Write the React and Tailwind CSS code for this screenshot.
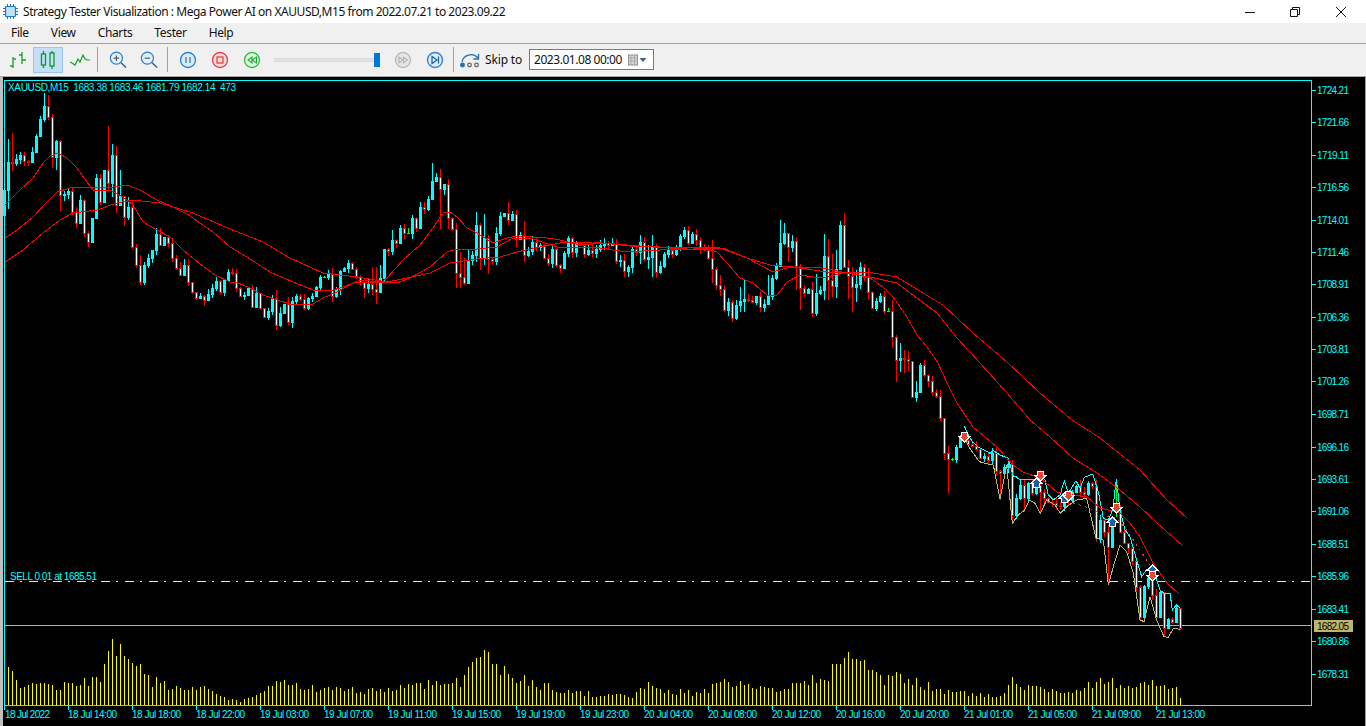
import React from "react";

const UI = { fontFamily: '"Noto Sans", "Liberation Sans", sans-serif' };
const CH = '"Liberation Sans", Arial, sans-serif';

const closes = [190,162,163,159,155,161,162,152,136,119,106,117,157,141,195,194,191,212,223,200,233,242,218,178,202,170,183,155,205,196,217,207,247,265,282,265,258,250,234,245,237,243,258,268,275,265,282,292,298,296,300,294,288,281,292,280,272,273,288,296,295,288,307,293,308,317,311,298,325,313,304,322,301,296,299,308,298,296,287,277,277,274,296,289,271,268,263,269,277,282,288,284,289,292,278,249,251,240,243,228,233,233,218,228,207,209,199,181,177,189,184,218,229,273,277,283,260,255,225,258,238,259,261,233,216,213,220,214,239,235,255,251,242,247,245,258,263,249,265,268,253,238,252,243,245,254,250,253,249,245,243,245,244,261,260,271,267,249,252,242,259,257,246,272,266,254,250,254,249,236,230,243,234,240,249,250,258,269,285,289,310,302,318,305,301,299,300,302,296,307,304,296,278,266,243,233,247,241,266,288,293,289,313,293,290,256,280,286,269,225,267,276,287,284,267,277,292,308,301,296,311,311,337,360,358,359,361,397,392,365,375,381,392,396,418,453,459,459,447,437,440,444,446,449,458,456,460,453,471,473,467,464,515,498,485,498,483,493,485,492,498,502,503,505,506,497,500,492,486,492,494,483,486,538,520,532,547,523,510,532,543,548,561,587,617,586,578,595,617,592,628,619,622,608,628];

const opens = { 0: 215, 278: 510 };
const wicks = {1:[139,209],2:[133,171],10:[93,122],11:[95,120],12:[114,168],13:[140,170],14:[140,211],26:[126,190],27:[144,197],28:[146,213],29:[170,204],30:[197,226],31:[197,220],34:[255,285],68:[290,330],71:[297,325],79:[275,290],82:[268,302],90:[278,298],92:[267,295],93:[267,304],94:[265,290],97:[230,255],107:[163,183],109:[169,229],111:[179,229],113:[223,288],114:[252,288],115:[258,285],116:[250,284],118:[212,262],119:[223,270],120:[214,265],121:[235,274],126:[202,225],128:[210,247],130:[221,262],162:[235,277],161:[245,269],159:[235,264],177:[240,283],179:[275,296],180:[285,312],183:[300,320],184:[287,312],185:[280,312],191:[275,305],192:[275,300],194:[220,266],195:[223,245],196:[233,262],198:[237,290],199:[264,310],202:[282,317],203:[274,316],205:[234,300],206:[239,300],207:[254,297],208:[250,298],209:[221,270],210:[213,268],211:[260,299],212:[267,312],213:[270,302],216:[268,300],222:[300,348],223:[335,382],224:[343,372],225:[350,373],226:[351,371],228:[381,402],236:[446,493],235:[420,460],249:[470,500],252:[460,523],255:[480,512],259:[470,513],273:[480,542],276:[525,585],278:[480,517],290:[600,637],294:[608,630]};

let seed = 17;
const rnd = () => { seed = (seed * 16807) % 2147483647; return seed / 2147483647; };

const candles = closes.map((c, k) => {
  const o = opens[k] ?? closes[k - 1];
  const top = Math.min(o, c), bot = Math.max(o, c);
  const r1 = Math.round(rnd() * 6), r2 = Math.round(rnd() * 6);
  const w = wicks[k] || [top - r1, bot + r2];
  return { x: 4 + 4 * k, o, c, top, bot, hi: w[0], lo: w[1] };
});

const volPts = [[4,28],[8,32],[16,24],[40,20],[80,20],[92,30],[100,30],[108,58],[120,50],[135,40],[150,25],[180,15],[200,18],[220,8],[240,4],[260,10],[276,24],[300,18],[340,15],[370,15],[400,18],[430,22],[460,25],[476,50],[490,45],[510,30],[540,20],[580,12],[610,10],[632,8],[640,22],[660,15],[700,12],[720,22],[760,18],[780,12],[795,30],[820,25],[846,46],[856,43],[880,25],[900,28],[940,15],[980,10],[1000,8],[1012,30],[1025,20],[1060,14],[1080,14],[1094,24],[1120,22],[1140,20],[1160,22],[1176,18],[1180,8]];
const volAt = (x) => {
  for (let i = 1; i < volPts.length; i++) {
    if (x <= volPts[i][0]) {
      const [a, b] = volPts[i - 1], [c, d] = volPts[i];
      return b + ((d - b) * (x - a)) / (c - a);
    }
  }
  return 8;
};

const fast = "5,205 20,190 33,178 43,163 50,156 58,153 67,158 77,168 87,182 93,190 110,190 123,197 133,205 143,222 157,230 170,237 183,250 200,264 215,275 230,282 238,283 250,288 263,295 277,300 290,304 313,304 323,298 337,292 353,283 360,280 370,281 383,281 387,278 403,260 420,245 433,228 443,213 450,212 457,217 467,228 477,233 493,243 507,238 517,236 547,238 560,240 580,245 603,243 627,245 653,247 687,249 707,249 717,252 727,263 740,278 753,283 767,295 777,295 787,282 800,275 813,277 827,277 847,272 870,278 883,287 893,297 907,317 917,335 927,347 938,363 947,383 957,403 973,427 997,447 1013,465 1023,472 1040,478 1057,492 1073,495 1087,497 1100,508 1120,513 1130,523 1140,537 1153,563 1167,583 1179,594";
const mid = "5,238 17,230 33,217 47,202 57,192 70,188 100,187 113,187 127,185 140,190 157,200 173,207 187,214 213,232 230,247 247,257 270,272 293,282 313,290 330,291 343,287 357,282 380,282 397,283 410,278 430,267 447,252 457,249 477,249 497,247 513,238 530,238 560,248 593,247 627,252 660,250 693,249 723,248 747,258 773,272 790,267 817,267 847,273 870,277 897,283 913,295 937,313 957,338 980,363 1007,393 1030,420 1050,437 1073,458 1097,473 1120,490 1140,507 1157,523 1183,546";
const slow = "5,262 23,250 43,233 60,220 73,213 97,210 117,203 133,200 160,203 193,213 230,229 263,242 290,258 323,273 357,277 387,282 407,278 430,273 450,263 477,259 500,257 517,252 540,247 560,243 593,242 630,246 660,247 693,247 720,248 747,258 770,265 793,267 827,272 873,273 897,277 923,293 943,305 973,333 1007,362 1040,393 1072,420 1100,438 1140,470 1167,500 1187,518";

const z5 = (s) => s.trim().split(/\s+/).map((p) => { const [a, b] = p.split(",").map(Number); return `${940 + a / 3},${420 + b / 3}`; }).join(" ");
const envTop = z5("73,18 85,45 97,65 115,82 133,90 150,100 160,92 180,105 205,115 220,170 228,170 240,180 290,178 300,165 315,180 325,225 340,240 360,225 373,182 385,220 408,182 420,205 433,172 458,162 475,215 490,295 505,300 518,270 529,178 540,270 555,330 570,350 590,420 605,470 620,448 640,448 660,510 672,520 690,520 697,570 709,555 721,565");
const envBot = z5("73,50 85,78 100,100 118,125 135,130 160,135 180,238 200,135 217,310 235,285 252,272 268,240 285,250 301,280 320,240 345,255 361,280 380,260 410,240 440,235 468,355 490,360 505,495 520,440 540,375 560,395 580,460 600,600 612,605 630,530 650,600 672,650 685,652 700,625 720,628");
const envDot = z5("400,250 430,258 460,270 490,285 530,295 560,330 590,375 620,420 640,450");

const prices = [["1724.21",90],["1721.66",122],["1719.11",155],["1716.56",187],["1714.01",220],["1711.46",252],["1708.91",284],["1706.36",317],["1703.81",349],["1701.26",381],["1698.71",414],["1696.16",447],["1693.61",479],["1691.06",511],["1688.51",544],["1685.96",576],["1683.41",609],["1680.86",641],["1678.31",674]];
const times = ["18 Jul 2022","18 Jul 14:00","18 Jul 18:00","18 Jul 22:00","19 Jul 03:00","19 Jul 07:00","19 Jul 11:00","19 Jul 15:00","19 Jul 19:00","19 Jul 23:00","20 Jul 04:00","20 Jul 08:00","20 Jul 12:00","20 Jul 16:00","20 Jul 20:00","21 Jul 01:00","21 Jul 05:00","21 Jul 09:00","21 Jul 13:00"];

function Sell({ x, y }) {
  return (
    <g shapeRendering="crispEdges">
      <polygon points={`${x - 3},${y - 5} ${x + 4},${y - 5} ${x + 4},${y - 1} ${x + 7},${y - 1} ${x + 0.5},${y + 6} ${x - 6},${y - 1} ${x - 3},${y - 1}`} fill="#fff" />
      <polygon points={`${x - 2},${y - 4} ${x + 3},${y - 4} ${x + 3},${y} ${x + 5},${y} ${x + 0.5},${y + 4} ${x - 4},${y} ${x - 2},${y}`} fill="#e8472b" />
    </g>
  );
}
function Buy({ x, y }) {
  return (
    <g shapeRendering="crispEdges">
      <polygon points={`${x + 0.5},${y - 6} ${x + 7},${y + 1} ${x + 4},${y + 1} ${x + 4},${y + 5} ${x - 3},${y + 5} ${x - 3},${y + 1} ${x - 6},${y + 1}`} fill="#fff" />
      <polygon points={`${x + 0.5},${y - 4} ${x + 5},${y} ${x + 3},${y} ${x + 3},${y + 4} ${x - 2},${y + 4} ${x - 2},${y} ${x - 4},${y}`} fill="#1f5fa8" />
    </g>
  );
}

function Chart() {
  const t = { fontFamily: CH, fontSize: 10, fill: "#00ffff", whiteSpace: "pre" };
  return (
    <svg width="1362" height="649" viewBox="3 77 1362 649" className="block bg-black">
      <g shapeRendering="crispEdges">
        <rect x="4" y="80" width="1308" height="1" fill="#00ffff" />
        <rect x="4" y="705" width="1308" height="1" fill="#00ffff" />
        <rect x="4" y="80" width="1" height="626" fill="#00ffff" />
        <rect x="1311" y="80" width="1" height="626" fill="#00ffff" />
        {prices.map(([p, y]) => <rect key={p} x="1312" y={y} width="4" height="1" fill="#00ffff" />)}
        {times.map((l, i) => <rect key={l} x={4 + 64 * i} y="706" width="1" height="4" fill="#00ffff" />)}

        {candles.map((c, k) => {
          const h = Math.max(2, Math.round(volAt(c.x) * (0.72 + rnd() * 0.5)));
          return k === 0 ? null : <rect key={k} x={c.x} y={705 - h} width="1" height={h} fill="#ffff00" />;
        })}

        <line x1="5" x2="1311" y1="625.5" y2="625.5" stroke="#bdb76b" />
        <line x1="5" x2="1311" y1="581.5" y2="581.5" stroke="#ffff00" strokeDasharray="9 6 2 7" />

        {candles.map((c, k) => {
          const doji = c.o === c.c;
          const up = c.c < c.o;
          if (doji && (k === 80 || k === 101 || k === 221 || k === 237 || k === 278)) {
            return (
              <g key={k} fill="#00ff00">
                <rect x={c.x} y={c.hi} width="1" height={c.lo - c.hi} />
                <rect x={c.x - 1} y={c.c} width="3" height="1" />
              </g>
            );
          }
          if (up) {
            return (
              <g key={k} fill="#00ffff">
                <rect x={c.x} y={c.hi} width="1" height={c.lo - c.hi} />
                <rect x={c.x - 1} y={c.top} width="3" height={c.bot - c.top + 1} />
              </g>
            );
          }
          const h = c.bot - c.top + 1;
          return (
            <g key={k}>
              <rect x={c.x} y={c.hi} width="1" height={c.lo - c.hi} fill="#ff0000" />
              <rect x={c.x - 1} y={c.top} width="3" height={Math.max(h, 2)} fill="#ff0000" />
              {h >= 3 && <rect x={c.x} y={c.top + 1} width="1" height={h - 2} fill="#ffffff" />}
            </g>
          );
        })}

        <polyline points={envDot} fill="none" stroke="#d8502c" strokeDasharray="2 4" />
        <polyline points={envBot} fill="none" stroke="#bdb76b" />
        <polyline points={envTop} fill="none" stroke="#00ffff" />
        <polyline points={slow} fill="none" stroke="#ff0000" />
        <polyline points={mid} fill="none" stroke="#ff0000" />
        <polyline points={fast} fill="none" stroke="#ff0000" />
        <rect x="1314" y="620" width="39" height="12" fill="#bdb76b" />
      </g>

      <Buy x={1036} y={483} />
      <Buy x={1064} y={498} />
      <Buy x={1112} y={522} />
      <Buy x={1152} y={570} />
      <Sell x={964} y={437} />
      <Sell x={1040} y={476} />
      <Sell x={1068} y={496} />
      <Sell x={1116} y={508} />
      <Sell x={1152} y={576} />

      <text x="8" y="91" style={t} textLength="228" lengthAdjust="spacing">{"XAUUSD,M15  1683.38 1683.46 1681.79 1682.14  473"}</text>
      <text x="10" y="580" style={t} textLength="87" lengthAdjust="spacing">SELL 0.01 at 1685.51</text>
      {prices.map(([p, y]) => <text key={p} x="1317" y={y + 3.5} style={t} textLength="32" lengthAdjust="spacing">{p}</text>)}
      <text x="1317" y="629.5" style={{ ...t, fill: "#000" }} textLength="32" lengthAdjust="spacing">1682.05</text>
      {times.map((l, i) => <text key={l} x={i === 0 ? 5 : 4 + 64 * i} y="718" style={t} textLength={i === 0 ? 45 : 49} lengthAdjust="spacing">{l}</text>)}
    </svg>
  );
}

const Sep = () => <div className="w-px h-[25px] bg-[#a0a0a0]" />;

function Circle({ stroke, fill, children }) {
  return (
    <svg width="18" height="18" viewBox="0 0 18 18" fill="none">
      <circle cx="9" cy="9" r="7.5" fill={fill} stroke={stroke} strokeWidth="1.4" />
      {children}
    </svg>
  );
}

function Lens({ minus }) {
  return (
    <svg width="20" height="20" viewBox="0 0 20 20" fill="none">
      <circle cx="8" cy="8" r="6.5" fill="#e2f0fb" stroke="#2f7fc8" strokeWidth="1.3" />
      <path d="M5 8h6" stroke="#35566f" strokeWidth="1.2" />
      {!minus && <path d="M8 5v6" stroke="#35566f" strokeWidth="1.2" />}
      <path d="M13 13l5.5 5" stroke="#35566f" strokeWidth="1.4" />
    </svg>
  );
}

function Toolbar() {
  return (
    <div className="flex items-center h-[31px] bg-[#f0f0f0] pl-[3px] text-[12px] text-[#111]">
      <div className="flex items-center justify-center w-[30px] h-[26px]">
        <svg width="20" height="18" viewBox="0 0 20 18" fill="none" stroke="#12a32c" strokeWidth="1.3">
          <path d="M5 17V6M2 15h3M5 8h3M14 13V1M14 4h-3M14 9h4" />
        </svg>
      </div>
      <div className="flex items-center justify-center w-[30px] h-[26px] bg-[#c4dff6] border border-[#98c8ee]">
        <svg width="16" height="18" viewBox="0 0 16 18" fill="none" stroke="#0a9a24" strokeWidth="1.3">
          <path d="M3.5 0v3M3.5 14v3M12 0v2M12 15v3" />
          <rect x="1.5" y="3" width="4" height="11" />
          <rect x="10" y="2" width="4" height="13" />
        </svg>
      </div>
      <div className="flex items-center justify-center w-[34px] h-[26px]">
        <svg width="20" height="12" viewBox="0 0 20 12" fill="none" stroke="#12a32c" strokeWidth="1.2">
          <path d="M0 8l2 1 3 2 3-6 2 3 3-7 2 4 2 1h3" />
        </svg>
      </div>
      <Sep />
      <div className="flex items-center ml-[11px] gap-[12px] w-[49px]"><Lens /><Lens minus /></div>
      <div className="ml-[9px]"><Sep /></div>
      <div className="flex items-center ml-[11px] gap-[14px]">
        <Circle stroke="#2f86d4" fill="#dbebfa"><path d="M7 6v6M11 6v6" stroke="#2f6fa8" strokeWidth="1.2" /></Circle>
        <Circle stroke="#e5484d" fill="#fbdcdc"><rect x="6" y="6" width="6" height="6" stroke="#d83c3c" strokeWidth="1.2" /></Circle>
        <Circle stroke="#35c24a" fill="#def5e0"><path d="M9 6v6L5 9zM13.5 6v6l-4-3z" stroke="#23a33a" strokeWidth="1.1" /></Circle>
      </div>
      <div className="relative ml-[13px] w-[106px] h-[14px] flex items-center">
        <div className="w-full h-[4px] bg-[#e2e2e2] border-y border-[#dadada]" />
        <div className="absolute right-[0px] top-0 w-[6px] h-[14px] bg-[#0078d7]" />
      </div>
      <div className="flex items-center ml-[14px] gap-[14px]">
        <Circle stroke="#bcbcbc" fill="#e6e6e6"><path d="M5 6v6l4-3zM9.5 6v6l4-3z" stroke="#b4b4b4" strokeWidth="1.1" /></Circle>
        <Circle stroke="#2f86d4" fill="#dbebfa"><path d="M6 5.5v7l5-3.5zM12.5 5.5v7" stroke="#1f5f9a" strokeWidth="1.2" /></Circle>
      </div>
      <div className="ml-[9px]"><Sep /></div>
      <svg className="ml-[6px]" width="21" height="16" viewBox="0 0 21 16" fill="none" stroke="#2a6ea6" strokeWidth="1.3">
        <path d="M2 10C3 3 13 0 18 6" />
        <path d="M18.5 2v5h-5" />
        <circle cx="2.5" cy="13" r="1.8" fill="#2a6ea6" />
        <circle cx="9.5" cy="13" r="1.8" fill="none" stroke="#666" />
        <circle cx="16.5" cy="13" r="1.8" fill="none" stroke="#666" />
      </svg>
      <span className="ml-[4px] w-[44px] whitespace-nowrap tracking-[-0.15px]" style={UI}>Skip to</span>
      <div className="flex items-center w-[125px] h-[21px] border border-[#7a7a7a] bg-white pl-[4px]">
        <span className="w-[94px] whitespace-nowrap tracking-[-0.45px]" style={UI}>2023.01.08 00:00</span>
        <svg width="18" height="12" viewBox="0 0 18 12" fill="none">
          <rect x="0.5" y="1" width="9" height="10" fill="#d8d8d8" stroke="#8a8a8a" />
          <path d="M0 4h10M0 7h10M3 1v10M6.5 1v10" stroke="#a8a8a8" />
          <path d="M11.5 4h7l-3.5 4z" fill="#4a5f80" />
        </svg>
      </div>
    </div>
  );
}

export default function App() {
  return (
    <div className="flex flex-col w-[1366px] h-[726px] overflow-hidden bg-white" style={UI}>
      <div className="flex items-center h-[23px] bg-white text-[12px] text-[#111]">
        <svg className="ml-[3px]" width="15" height="15" viewBox="0 0 15 15">
          <rect x="2.5" y="2.5" width="10" height="10" rx="1" fill="#bfe0f7" stroke="#1f78c8" strokeWidth="1.2" />
          <path d="M4.5 0v2.5M7.5 0v2.5M10.5 0v2.5M4.5 12.5V15M7.5 12.5V15M10.5 12.5V15M0 4.5h2.5M0 7.5h2.5M0 10.5h2.5M12.5 4.5H15M12.5 7.5H15M12.5 10.5H15" stroke="#1f78c8" />
        </svg>
        <span className="ml-[5px] flex-1 tracking-[-0.46px]">Strategy Tester Visualization : Mega Power AI on XAUUSD,M15 from 2022.07.21 to 2023.09.22</span>
        <div className="flex items-center pr-[20px]">
          <svg width="10" height="10" viewBox="0 0 10 10" stroke="#111" fill="none"><path d="M0 5.5h10" /></svg>
          <svg className="ml-[35px]" width="10" height="10" viewBox="0 0 10 10" stroke="#111" fill="none"><path d="M.5 2.5h7v7h-7zM2.5 2.5v-2h7v7h-2" /></svg>
          <svg className="ml-[36px]" width="10" height="10" viewBox="0 0 10 10" stroke="#111" fill="none"><path d="M0 0l10 10M10 0L0 10" /></svg>
        </div>
      </div>
      <div className="flex items-center h-[20px] bg-[#f0f0f0] pl-[11px] gap-[22px] text-[12px] text-[#111] tracking-[-0.35px]">
        <span>File</span><span>View</span><span>Charts</span><span>Tester</span><span>Help</span>
      </div>
      <div className="h-px bg-[#a0a0a0]" />
      <Toolbar />
      <div className="h-px bg-[#fafafa]" />
      <div className="h-px bg-[#a0a0a0]" />
      <div className="flex flex-1 bg-[#a8a8a8]">
        <div className="w-[3px] bg-[#c0c0c0]" />
        <Chart />
        <div className="w-px bg-[#a0a0a0]" />
      </div>
    </div>
  );
}
